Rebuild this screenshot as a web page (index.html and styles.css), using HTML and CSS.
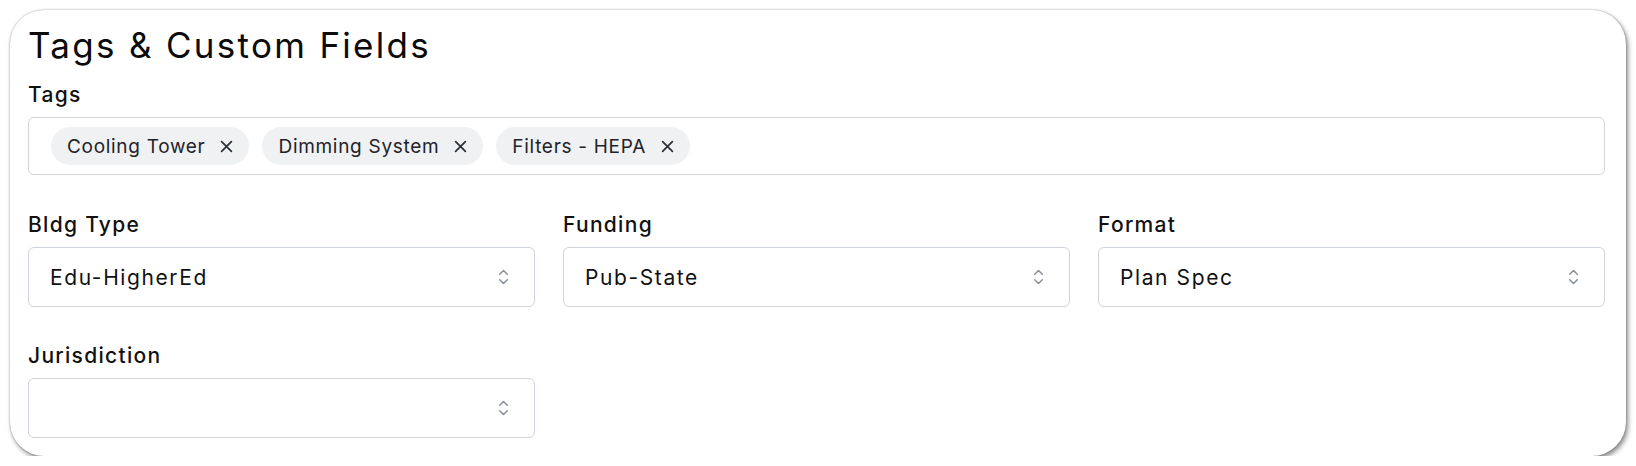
FILE: index.html
```html
<!DOCTYPE html>
<html lang="en">
<head>
<meta charset="utf-8">
<title>Tags &amp; Custom Fields</title>
<link rel="stylesheet" href="styles.css">
</head>
<body>
<section class="card">
  <h2 class="title">Tags &amp; Custom Fields</h2>

  <div class="field tags-field">
    <label class="label">Tags</label>
    <div class="tag-box">
      <span class="chip">Cooling Tower<svg class="x" viewBox="0 0 12 12"><path d="M1.5 1.5l9 9M10.5 1.5l-9 9"/></svg></span>
      <span class="chip">Dimming System<svg class="x" viewBox="0 0 12 12"><path d="M1.5 1.5l9 9M10.5 1.5l-9 9"/></svg></span>
      <span class="chip">Filters - HEPA<svg class="x" viewBox="0 0 12 12"><path d="M1.5 1.5l9 9M10.5 1.5l-9 9"/></svg></span>
    </div>
  </div>

  <div class="grid">
    <div class="field">
      <label class="label">Bldg Type</label>
      <div class="select"><span class="value">Edu-HigherEd</span><svg class="chev" viewBox="0 0 12 20"><path d="M2.5 7.5L6 4l3.5 3.5M2.5 12.5L6 16l3.5-3.5"/></svg></div>
    </div>
    <div class="field">
      <label class="label">Funding</label>
      <div class="select"><span class="value">Pub-State</span><svg class="chev" viewBox="0 0 12 20"><path d="M2.5 7.5L6 4l3.5 3.5M2.5 12.5L6 16l3.5-3.5"/></svg></div>
    </div>
    <div class="field">
      <label class="label">Format</label>
      <div class="select"><span class="value">Plan Spec</span><svg class="chev" viewBox="0 0 12 20"><path d="M2.5 7.5L6 4l3.5 3.5M2.5 12.5L6 16l3.5-3.5"/></svg></div>
    </div>
    <div class="field">
      <label class="label">Jurisdiction</label>
      <div class="select"><span class="value"></span><svg class="chev" viewBox="0 0 12 20"><path d="M2.5 7.5L6 4l3.5 3.5M2.5 12.5L6 16l3.5-3.5"/></svg></div>
    </div>
  </div>
</section>
</body>
</html>
```

FILE: styles.css
```css
* { box-sizing: border-box; }

html, body {
  margin: 0;
  background: #ffffff;
}

body {
  padding: 10px 10px 0 10px;
  font-family: Inter, "Noto Sans", "Liberation Sans", sans-serif;
  color: #111827;
}

.card {
  background: #ffffff;
  border-radius: 34px;
  padding: 15px 21px 18px 18px;
  box-shadow: 0 0 2px rgba(0, 0, 0, 0.35), 2px 3px 5px rgba(0, 0, 0, 0.45);
}

.title {
  margin: 0 0 16px 0;
  font-size: 35px;
  line-height: 40px;
  font-weight: 400;
  color: #0b0b0b;
  letter-spacing: 2.3px;
}

.label {
  display: block;
  font-size: 21px;
  line-height: 28px;
  font-weight: 500;
  color: #111111;
  letter-spacing: 1.3px;
  margin-bottom: 8px;
}

.tags-field {
  margin-bottom: 36px;
}

.tag-box {
  display: flex;
  align-items: center;
  gap: 13px;
  height: 58px;
  padding: 0 22px;
  border: 1px solid #d1d5db;
  border-radius: 6px;
}

.chip {
  display: inline-flex;
  align-items: center;
  gap: 15px;
  height: 38px;
  padding: 0 16px;
  border-radius: 19px;
  background: #f0f1f3;
  font-size: 19px;
  letter-spacing: 0.7px;
  color: #1f2328;
}

.x {
  width: 13px;
  height: 13px;
  fill: none;
  stroke: #2b2f36;
  stroke-width: 1.6;
  stroke-linecap: round;
}

.grid {
  display: grid;
  grid-template-columns: repeat(3, 1fr);
  column-gap: 28px;
  row-gap: 35px;
}

.select {
  display: flex;
  align-items: center;
  justify-content: space-between;
  height: 60px;
  padding: 0 24px 0 21px;
  border: 1px solid #cfd4da;
  border-radius: 6px;
  font-size: 21px;
  letter-spacing: 1.6px;
  color: #111111;
}

.chev {
  width: 13px;
  height: 22px;
  fill: none;
  stroke: #8a9099;
  stroke-width: 1.4;
  stroke-linecap: round;
  stroke-linejoin: round;
}
```
